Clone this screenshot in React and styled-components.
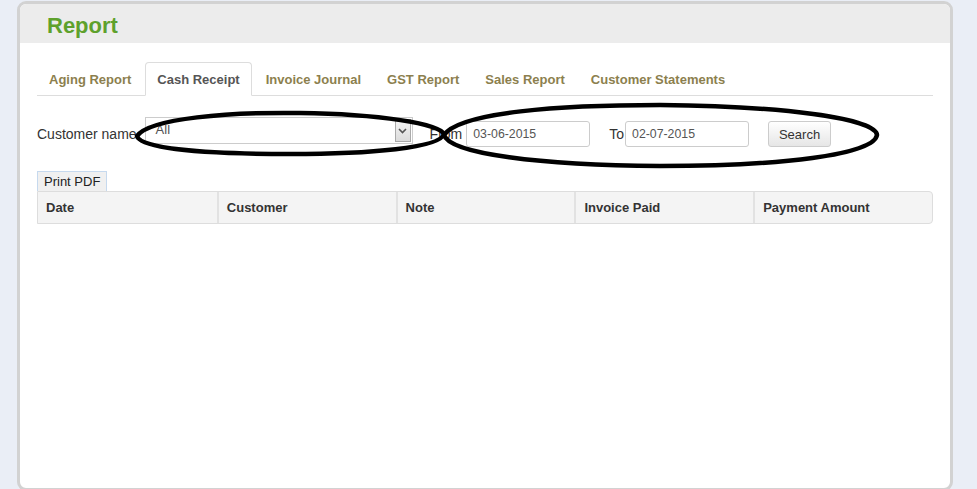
import React from 'react';
import styled, { createGlobalStyle } from 'styled-components';

const GlobalStyle = createGlobalStyle`
  body {
    margin: 0;
    background: #eaeef6;
    font-family: 'Liberation Sans', Arial, sans-serif;
  }
`;

const Page = styled.div`
  position: relative;
  width: 977px;
  height: 489px;
  overflow: hidden;
`;

const Panel = styled.div`
  box-sizing: border-box;
  margin: 1px 0 0 17px;
  width: 936px;
  height: 490px;
  background: #fff;
  border: 3px solid #d2d2d2;
  border-radius: 9px;
  overflow: hidden;
`;

const Header = styled.div`
  box-sizing: border-box;
  height: 39px;
  background: #ececec;
  display: flex;
  align-items: center;
  padding: 5px 0 0 27px;

  & > h1 {
    margin: 0;
    font-size: 22px;
    font-weight: bold;
    color: #5ea12c;
  }
`;

const Body = styled.div`
  padding: 19px 17px 0;
`;

const Tabs = styled.ul`
  display: flex;
  margin: 0;
  padding: 0;
  list-style: none;
  border-bottom: 1px solid #dddddd;
  height: 33px;
`;

const Tab = styled.li`
  box-sizing: border-box;
  height: 34px;
  padding: 0 11px;
  margin-right: 2px;
  display: flex;
  align-items: center;
  font-size: 13px;
  font-weight: bold;
  color: ${(props) => (props.active ? '#555555' : '#8c7f4e')};
  background: ${(props) => (props.active ? '#fff' : 'transparent')};
  border: 1px solid ${(props) => (props.active ? '#dddddd' : 'transparent')};
  border-bottom-color: transparent;
  border-radius: 4px 4px 0 0;
`;

const FilterRow = styled.div`
  display: flex;
  align-items: flex-start;
  margin-top: 21px;
  height: 30px;
  font-size: 14px;
  color: #333;
`;

const Label = styled.span`
  margin-top: 9px;
  line-height: 16px;
  margin-right: ${(props) => props.gap}px;
  margin-left: ${(props) => props.lead || 0}px;
`;

const SelectBox = styled.div`
  box-sizing: border-box;
  width: 268px;
  height: 27px;
  border: 1px solid #cccccc;
  display: flex;
  align-items: center;
  justify-content: space-between;
  padding-left: 10px;
  color: #555;
  font-size: 13px;

  & > span {
    margin-top: -3px;
  }
`;

const SelectArrow = styled.div`
  box-sizing: border-box;
  width: 16px;
  height: 23px;
  margin-right: 1px;
  background: linear-gradient(#f4f4f4, #dcdcdc);
  border: 1px solid #aaa;
  display: flex;
  align-items: center;
  justify-content: center;
`;

const DateInput = styled.div`
  box-sizing: border-box;
  margin-top: 4px;
  width: 124px;
  height: 26px;
  border: 1px solid #cccccc;
  border-radius: 3px;
  padding-left: 6px;
  display: flex;
  align-items: center;
  font-size: 12.3px;
  color: #555;
`;

const SearchButton = styled.button`
  box-sizing: border-box;
  margin: 4px 0 0 19px;
  width: 63px;
  height: 26px;
  border: 1px solid #cccccc;
  border-radius: 3px;
  background: linear-gradient(#ffffff, #e6e6e6);
  font-family: inherit;
  font-size: 13px;
  color: #333;
  padding: 0;
`;

const PrintButton = styled.button`
  display: block;
  box-sizing: border-box;
  margin-top: 24px;
  height: 20px;
  padding: 0 6px;
  border: 1px solid #c6d9ee;
  border-bottom: none;
  background: #f0f0f0;
  font-family: inherit;
  font-size: 13px;
  color: #222;
`;

const Table = styled.div`
  display: grid;
  grid-template-columns: repeat(5, 1fr);
  border: 1px solid #dddddd;
  border-radius: 0 4px 4px 0;
  background: #f4f4f4;
  height: 33px;
  box-sizing: border-box;
`;

const HeadCell = styled.div`
  display: flex;
  align-items: center;
  padding-left: 8px;
  font-size: 13px;
  font-weight: bold;
  color: #333;
  border-left: ${(props) => (props.first ? 'none' : '2px solid #e2e2e2')};
`;

const Marks = styled.svg`
  position: absolute;
  left: 0;
  top: 0;
  pointer-events: none;
`;

const tabs = [
  'Aging Report',
  'Cash Receipt',
  'Invoice Journal',
  'GST Report',
  'Sales Report',
  'Customer Statements',
];

const columns = ['Date', 'Customer', 'Note', 'Invoice Paid', 'Payment Amount'];

export default function App() {
  return (
    <Page>
      <GlobalStyle />
      <Panel>
        <Header>
          <h1>Report</h1>
        </Header>
        <Body>
          <Tabs>
            {tabs.map((t) => (
              <Tab key={t} active={t === 'Cash Receipt'}>
                {t}
              </Tab>
            ))}
          </Tabs>
          <FilterRow>
            <Label gap={8}>Customer name</Label>
            <SelectBox>
              <span>All</span>
              <SelectArrow>
                <svg width="9" height="6" viewBox="0 0 9 6">
                  <path d="M1 1 L4.5 4.5 L8 1" fill="none" stroke="#555" strokeWidth="1.6" />
                </svg>
              </SelectArrow>
            </SelectBox>
            <Label lead={17} gap={4}>From</Label>
            <DateInput>03-06-2015</DateInput>
            <Label lead={19} gap={1}>To</Label>
            <DateInput>02-07-2015</DateInput>
            <SearchButton>Search</SearchButton>
          </FilterRow>
          <PrintButton>Print PDF</PrintButton>
          <Table>
            {columns.map((c, i) => (
              <HeadCell key={c} first={i === 0}>
                {c}
              </HeadCell>
            ))}
          </Table>
        </Body>
      </Panel>
      <Marks width="977" height="489" viewBox="0 0 977 489">
        <path
          d="M137 136 C150 118 230 112 300 113 C380 114 440 124 444 134 C440 148 370 154 290 154 C200 154 140 148 137 136 Z"
          fill="none"
          stroke="#000"
          strokeWidth="4.5"
        />
        <path
          d="M444 135 C460 112 560 105 660 105 C780 106 876 118 877 135 C874 155 780 166 660 166 C540 165 450 154 444 135 Z"
          fill="none"
          stroke="#000"
          strokeWidth="4.5"
        />
      </Marks>
    </Page>
  );
}
